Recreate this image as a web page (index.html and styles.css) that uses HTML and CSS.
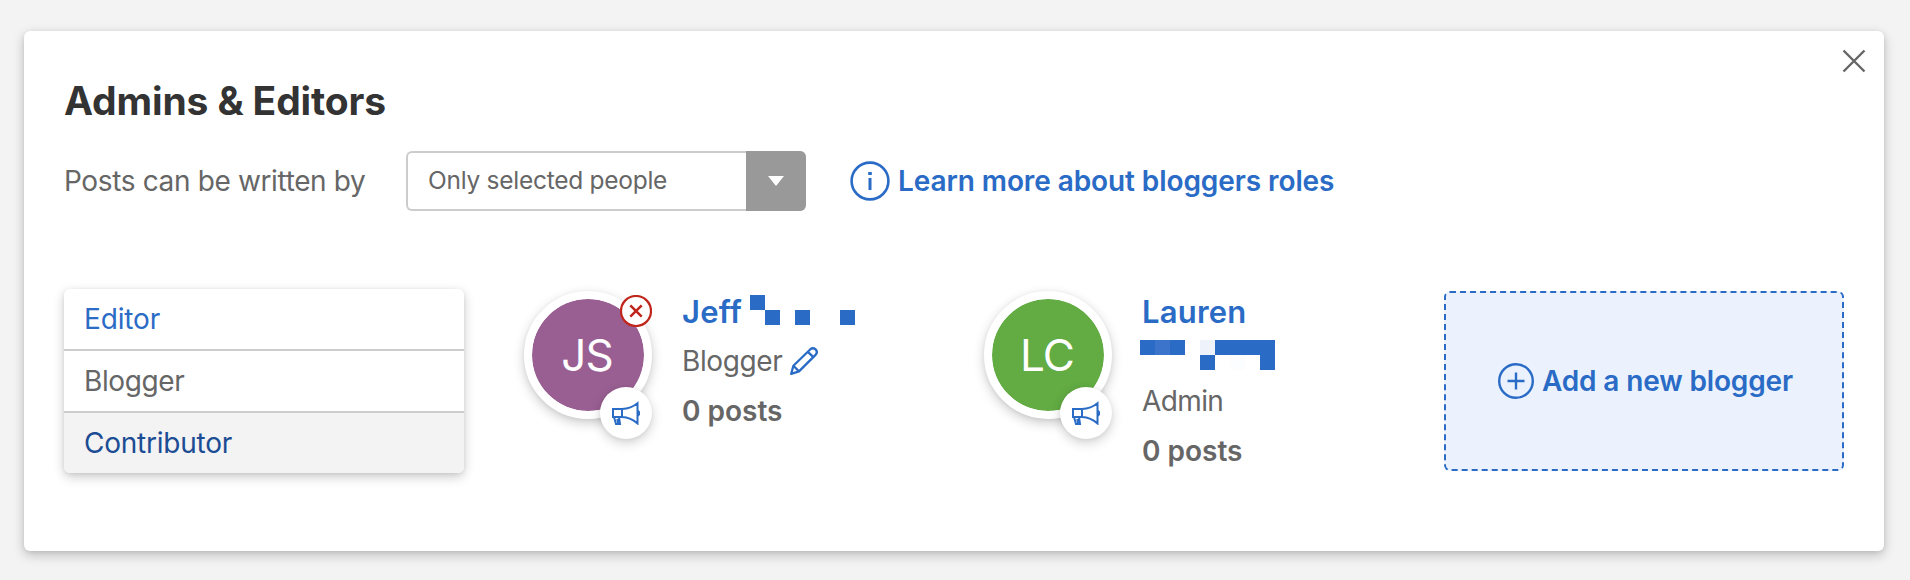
FILE: index.html
```html
<!DOCTYPE html>
<html lang="en">
<head>
<meta charset="utf-8">
<title>Admins &amp; Editors</title>
<link rel="stylesheet" href="styles.css">
</head>
<body>
<svg class="sprite" aria-hidden="true">
  <symbol id="megaphone" viewBox="0 0 28 24">
    <g fill="none" stroke="#2a6bc6" stroke-width="2">
      <path d="M1 8H10V16H1ZM10 8Q19 7.5 25.5 2.2V22.4Q19 16.5 10 16M2 16L4 23H8L7 16M5.2 18L6.2 22"/>
    </g>
    <path d="M26 9Q28.6 10.2 28.2 12.2Q28.6 14.2 26 15.4Z" fill="#2a6bc6"/>
  </symbol>
</svg>
<main class="card">
  <button class="close" aria-label="Close"><svg width="24" height="24" viewBox="0 0 24 24"><path d="M1.5 1.5L22.5 22.5M22.5 1.5L1.5 22.5"/></svg></button>
  <h1 class="title">Admins &amp; Editors</h1>
  <div class="settings">
    <span class="settings-label">Posts can be written by</span>
    <div class="select">
      <span class="select-value">Only selected people</span>
      <span class="select-arrow"><svg width="16" height="10" viewBox="0 0 16 10"><path d="M0 0H16L8 10Z" fill="#fff"/></svg></span>
    </div>
    <a class="learn"><svg width="40" height="40" viewBox="0 0 40 40"><circle cx="20" cy="20" r="18.4" fill="none" stroke="#2a6bc6" stroke-width="2.6"/><path d="M18.2 11H21.8V14H18.2ZM18.5 17H21.5V29H18.5Z" fill="#2a6bc6"/></svg><span>Learn more about bloggers roles</span></a>
  </div>
  <div class="people">
    <ul class="menu">
      <li class="menu-item editor">Editor</li>
      <li class="menu-item blogger">Blogger</li>
      <li class="menu-item contributor">Contributor</li>
    </ul>
    <section class="person">
      <div class="avatar purple">
        <span class="initials">JS</span>
        <svg class="remove" width="32" height="32" viewBox="0 0 32 32"><circle cx="16" cy="16" r="15" fill="#fff" stroke="#c0261b" stroke-width="2.2"/><path d="M10.3 10.3L21.7 21.7M21.7 10.3L10.3 21.7" stroke="#c0261b" stroke-width="2.5"/></svg>
        <span class="announce"><svg width="28" height="24"><use href="#megaphone"/></svg></span>
      </div>
      <div class="info">
        <div class="name"><span class="jeff">Jeff</span><svg class="mask-jeff" width="105" height="30" fill="#2a6bc6" shape-rendering="crispEdges"><path d="M0 0h15v15H0zM15 15h15v15H15zM45 15h15v15H45zM90 15h15v15H90z"/></svg></div>
        <div class="role"><span class="role-blogger">Blogger</span><svg width="28" height="28" viewBox="0 0 28 28" fill="none" stroke="#2a6bc6" stroke-width="2.3" stroke-linejoin="round"><path d="M1.2 26.8L3.4 18.8L20.4 2.2Q23 .2 25.6 2.4Q28 5 25.8 7.6L9 24.4ZM3.4 18.8L9 24.4M17.8 4.8L23.4 10.2"/></svg></div>
        <div class="posts">0 posts</div>
      </div>
    </section>
    <section class="person">
      <div class="avatar green">
        <span class="initials">LC</span>
        <span class="announce"><svg width="28" height="24"><use href="#megaphone"/></svg></span>
      </div>
      <div class="info">
        <div class="name"><span class="lauren">Lauren</span></div>
        <div class="name"><svg class="mask-lauren" width="135" height="30" fill="#2a6bc6" shape-rendering="crispEdges"><path d="M0 0h45v15H0zM75 0h60v30h-15V15H75zM60 15h15v15H60z"/><path d="M15 0h15v15H15z" fill="#3c74cb"/><path d="M60 0h15v15H60z" fill="#eef3fb"/><path d="M90 15h15v15H90z" fill="#fcfdff"/></svg></div>
        <div class="role"><span class="admin">Admin</span></div>
        <div class="posts">0 posts</div>
      </div>
    </section>
    <button class="add"><svg width="36" height="36" viewBox="0 0 36 36" fill="none" stroke="#2a6bc6"><circle cx="18" cy="18" r="16.8" stroke-width="2.4"/><path d="M9.5 18H26.5M18 9.5V26.5" stroke-width="2.4"/></svg><span>Add a new blogger</span></button>
  </div>
</main>
</body>
</html>
```
FILE: styles.css
```css
* { box-sizing: border-box; }
body {
  margin: 0;
  height: 580px;
  overflow: hidden;
  padding: 31px 26px 0 24px;
  background: #f3f3f3;
  color: #666;
  font-family: Inter, "Liberation Sans", sans-serif;
  font-size: 28px;
}
button { font: inherit; border: 0; padding: 0; background: none; }
svg { display: block; flex: none; }
span { white-space: nowrap; }
.sprite { position: absolute; width: 0; height: 0; }
.card {
  position: relative;
  width: 1860px;
  height: 520px;
  padding: 40px;
  background: #fff;
  border-radius: 6px;
  box-shadow: 0 4px 12px rgba(0, 0, 0, .22), 0 1px 4px rgba(0, 0, 0, .08);
}
.close { position: absolute; top: 18px; right: 18px; }
.close path { stroke: #666; stroke-width: 2.4; }
.title {
  margin: 0;
  font-size: 39px;
  line-height: 60px;
  font-weight: 700;
  letter-spacing: -.13px;
  color: #333;
}
.settings { display: flex; align-items: center; height: 60px; margin-top: 20px; }
.settings-label { width: 342px; line-height: 60px; letter-spacing: -.36px; }
.select {
  display: flex;
  width: 400px;
  height: 60px;
  border: 2px solid #ccc;
  border-right: 0;
  border-radius: 6px;
}
.select-value {
  flex: 1;
  padding-left: 20px;
  font-size: 24.5px;
  line-height: 55px;
  letter-spacing: -.27px;
}
.select-arrow {
  display: grid;
  place-items: center;
  width: 60px;
  height: 60px;
  margin-top: -2px;
  background: #999;
  border-radius: 0 6px 6px 0;
}
.learn {
  display: flex;
  align-items: center;
  gap: 8px;
  margin-left: 44px;
  line-height: 60px;
  color: #2a6bc6;
  font-weight: 600;
  letter-spacing: -.09px;
}
.people {
  display: grid;
  grid-template-columns: repeat(4, 400px);
  column-gap: 60px;
  align-items: start;
  margin-top: 80px;
}
.menu {
  list-style: none;
  margin: -2px 0 0;
  padding: 0;
  border-radius: 6px;
  overflow: hidden;
  background: #fff;
  box-shadow: 0 4px 12px rgba(0, 0, 0, .2), 0 1px 4px rgba(0, 0, 0, .08);
}
.menu-item { height: 62px; padding-left: 20px; line-height: 60px; border-bottom: 2px solid #ccc; }
.editor { color: #2a6bc6; letter-spacing: -.15px; }
.blogger { letter-spacing: -.4px; }
.contributor { height: 60px; border: 0; background: #f3f3f3; color: #1b4c94; letter-spacing: -.24px; }
.person { display: flex; }
.avatar {
  position: relative;
  display: grid;
  place-items: center;
  width: 128px;
  height: 128px;
  border: 8px solid #fff;
  border-radius: 50%;
  box-shadow: 0 4px 12px rgba(0, 0, 0, .2), 0 1px 4px rgba(0, 0, 0, .06);
}
.purple { background: #995f92 padding-box; }
.green { background: #62ac43 padding-box; }
.initials {
  color: #fff;
  font-size: 44px;
  font-weight: 400;
  line-height: 112px;
  letter-spacing: -1px;
  margin-left: -2px;
}
.remove { position: absolute; top: -4px; right: -8px; }
.announce {
  position: absolute;
  right: -8px;
  bottom: -28px;
  display: grid;
  place-items: center;
  width: 52px;
  height: 52px;
  border-radius: 50%;
  background: #fff;
  box-shadow: 0 4px 12px rgba(0, 0, 0, .18), 0 1px 4px rgba(0, 0, 0, .06);
}
.info { padding: 1px 0 0 30px; }
.name {
  display: flex;
  height: 40px;
  color: #2a6bc6;
  font-size: 31px;
  font-weight: 600;
  line-height: 40px;
}
.jeff { width: 68px; letter-spacing: .2px; }
.lauren { letter-spacing: .2px; }
.mask-jeff { margin-top: 3px; }
.mask-lauren { margin: 8px 0 0 -2px; }
.role { display: flex; align-items: center; height: 50px; margin-top: 4px; line-height: 50px; }
.role-blogger { width: 108px; letter-spacing: -.4px; }
.admin { letter-spacing: -.6px; }
.posts { height: 50px; line-height: 50px; font-weight: 600; }
.add {
  display: flex;
  align-items: center;
  justify-content: flex-start;
  gap: 8px;
  width: 400px;
  height: 180px;
  padding-left: 52px;
  border: 2px dashed #2a6bc6;
  border-radius: 6px;
  background: #ebf2fe;
  color: #2a6bc6;
  font-weight: 600;
  letter-spacing: -.15px;
}
```
